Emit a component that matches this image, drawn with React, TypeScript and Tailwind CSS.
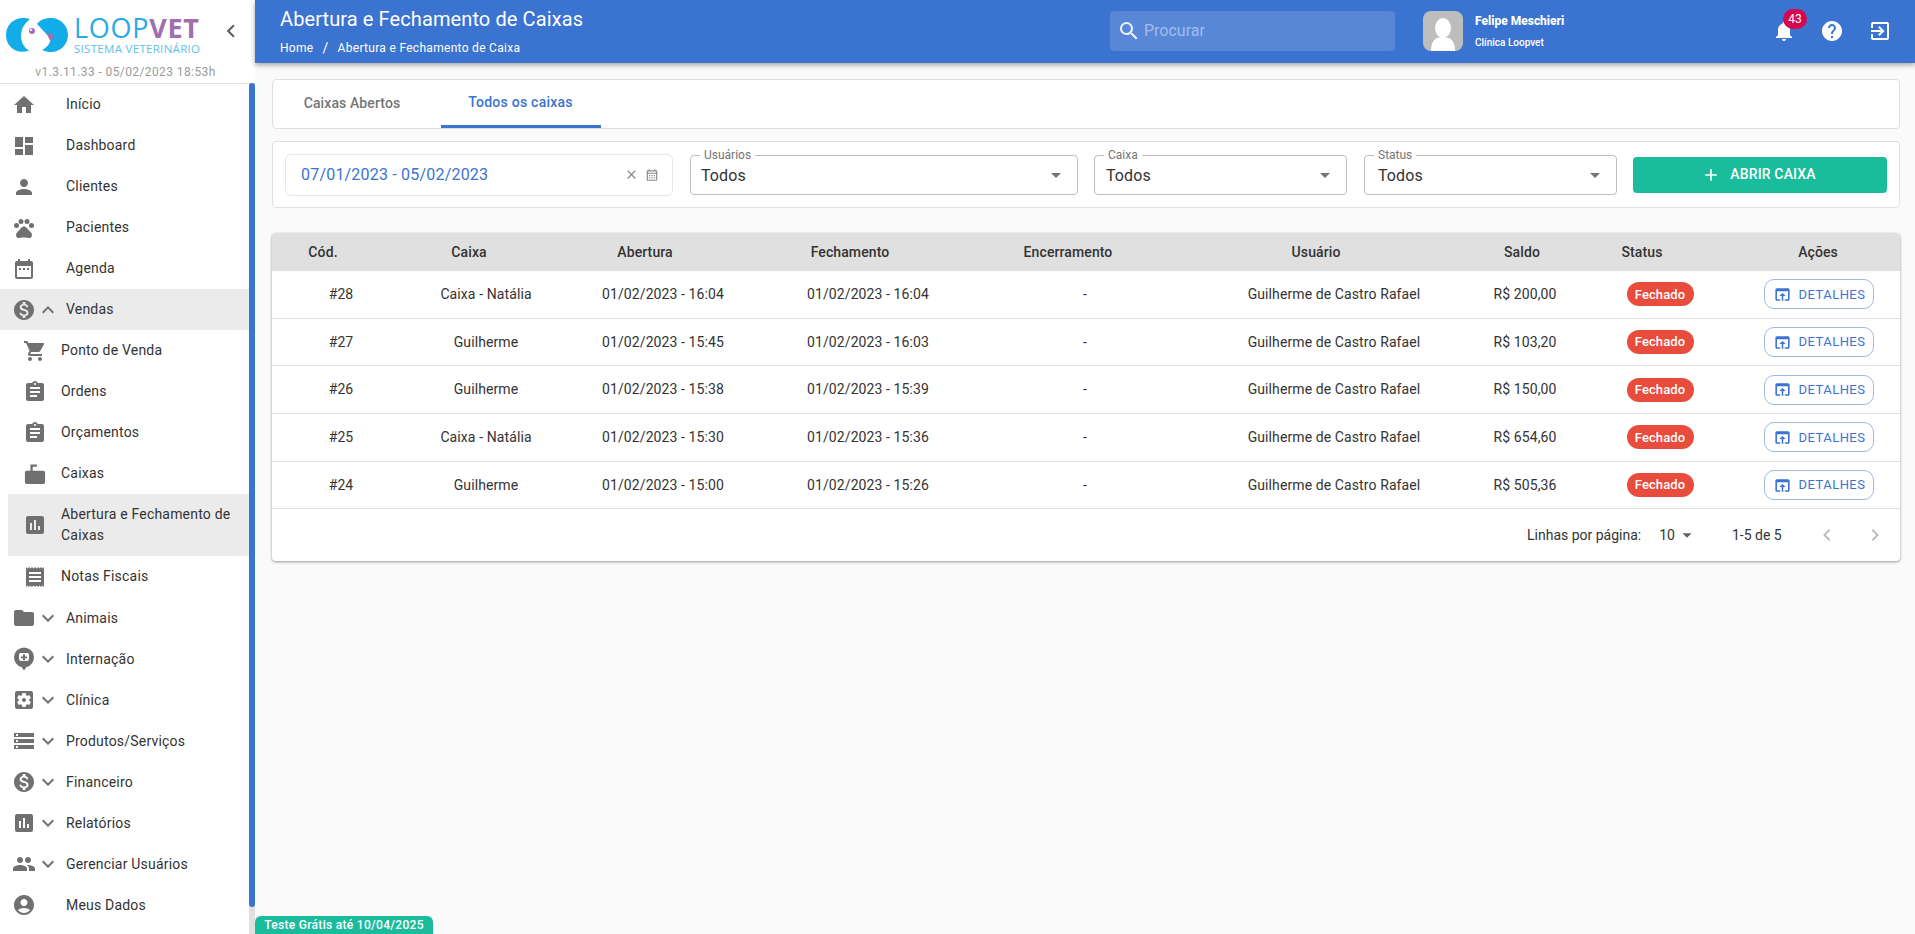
import React from "react";
import {
  MdHome, MdDashboard, MdPerson, MdPets, MdDateRange, MdMonetizationOn, MdExpandLess, MdExpandMore,
  MdShoppingCart, MdAssignment, MdAssessment, MdReceipt, MdFolder, MdSettingsApplications, MdStorage,
  MdPeople, MdAccountCircle, MdSearch, MdNotifications, MdHelp, MdExitToApp, MdOpenInBrowser, MdClose,
  MdOutlineCalendarMonth, MdArrowDropDown, MdChevronLeft, MdChevronRight, MdAdd,
} from "react-icons/md";

const HospitalPin = ({ size = 24 }: { size?: number }) => (
  <svg width={size} height={size} viewBox="0 0 24 24" fill="currentColor">
    <path fillRule="evenodd" d="M12 .5a10 10 0 0 1 2.200 19.750L12 23.500l-2.200-3.250A10 10 0 0 1 12 .5zM8.500 6A1.500 1.500 0 0 0 7 7.500v4A2.500 2.500 0 0 0 9.500 14h5a2.500 2.500 0 0 0 2.500-2.500v-4A1.500 1.500 0 0 0 15.500 6zM11 7.500h2v2h2v1.800h-2v2h-2v-2H9V9.500h2z" />
  </svg>
);

const CashBox = ({ size = 24 }: { size?: number }) => (
  <svg width={size} height={size} viewBox="0 0 24 24" fill="currentColor">
    <path d="M7 1.500h7V4H9.500v4.500H21a2 2 0 0 1 2 2V21a2 2 0 0 1-2 2H3a2 2 0 0 1-2-2V10.500a2 2 0 0 1 2-2h4z" />
  </svg>
);

const Logo = () => (
  <svg width="64" height="36" viewBox="6 17 64 36">
    <path fill="#12ace8" d="M30 19C17 15 6 23 6 35c0 12 11 20 23 15.500-5-3-8-8-8-14.500 0-7 3-12 9-17z" />
    <path fill="#12ace8" d="M37 24c3-4 8-6 14-6 10 0 17 8 17 17s-7 17-17 17c-3 0-6-.6-9-2 4-2 8-6 9-11z" />
    <path fill="#a76fb0" d="M46 33l8 2c-.5 3-2 5-4 6-1-3-2.500-6-4-8z" />
    <circle cx="32" cy="31" r="3" fill="#a76fb0" />
    <circle cx="31" cy="30" r="1" fill="#fff" />
  </svg>
);

type Item = { icon: React.ReactNode; label: React.ReactNode; arrow?: "up" | "down"; sub?: boolean; active?: boolean; tall?: boolean };

const items: Item[] = [
  { icon: <MdHome size={24} />, label: "Início" },
  { icon: <MdDashboard size={24} />, label: "Dashboard" },
  { icon: <MdPerson size={24} />, label: "Clientes" },
  { icon: <MdPets size={24} />, label: "Pacientes" },
  { icon: <MdDateRange size={24} />, label: "Agenda" },
  { icon: <MdMonetizationOn size={24} />, label: "Vendas", arrow: "up", active: true },
  { icon: <MdShoppingCart size={24} />, label: "Ponto de Venda", sub: true },
  { icon: <MdAssignment size={24} />, label: "Ordens", sub: true },
  { icon: <MdAssignment size={24} />, label: "Orçamentos", sub: true },
  { icon: <CashBox size={22} />, label: "Caixas", sub: true },
  { icon: <MdAssessment size={24} />, label: "Abertura e Fechamento de Caixas", sub: true, active: true, tall: true },
  { icon: <MdReceipt size={24} />, label: "Notas Fiscais", sub: true },
  { icon: <MdFolder size={24} />, label: "Animais", arrow: "down" },
  { icon: <HospitalPin size={26} />, label: "Internação", arrow: "down" },
  { icon: <MdSettingsApplications size={24} />, label: "Clínica", arrow: "down" },
  { icon: <MdStorage size={24} />, label: "Produtos/Serviços", arrow: "down" },
  { icon: <MdMonetizationOn size={24} />, label: "Financeiro", arrow: "down" },
  { icon: <MdAssessment size={24} />, label: "Relatórios", arrow: "down" },
  { icon: <MdPeople size={26} />, label: "Gerenciar Usuários", arrow: "down" },
  { icon: <MdAccountCircle size={24} />, label: "Meus Dados" },
];

const MenuRow = ({ item }: { item: Item }) => {
  if (item.sub) {
    return (
      <div className={`ml-2 flex items-center pl-[15px] pr-2 text-[#333] ${item.tall ? "h-[62px]" : "h-[41.050px]"} ${item.active ? "bg-[#ebebeb]" : ""}`}>
        <span className="flex w-[24px] shrink-0 justify-center text-[#707070]">{item.icon}</span>
        <span className="ml-[14px] text-[14px] leading-[21px] tracking-[0.2px]">{item.label}</span>
      </div>
    );
  }
  return (
    <div className={`flex h-[41.050px] items-center pl-[12px] text-[#333] ${item.active ? "bg-[#ebebeb]" : ""}`}>
      <span className="flex w-[24px] shrink-0 justify-center text-[#707070]">{item.icon}</span>
      <span className="flex w-[24px] shrink-0 justify-center text-[#707070]">
        {item.arrow === "up" && <MdExpandLess size={24} />}
        {item.arrow === "down" && <MdExpandMore size={24} />}
      </span>
      <span className="ml-[6px] text-[14px] tracking-[0.2px]">{item.label}</span>
    </div>
  );
};

const Select = ({ label, w, pl }: { label: string; w: string; pl: string }) => (
  <div className={`relative flex h-[40px] items-center justify-between rounded-[4px] border border-[#bdbdbd] pr-[9px] ${pl} ${w}`}>
    <span className="absolute left-[9px] top-[-7px] bg-white px-[4px] text-[12px] leading-[13px] text-[#757575]">{label}</span>
    <span className="pt-[2px] text-[16px] tracking-[0.1px] text-[#333]">Todos</span>
    <MdArrowDropDown size={24} className="text-[#757575]" />
  </div>
);

const rows = [
  ["#28", "Caixa - Natália", "01/02/2023 - 16:04", "01/02/2023 - 16:04", "R$ 200,00"],
  ["#27", "Guilherme", "01/02/2023 - 15:45", "01/02/2023 - 16:03", "R$ 103,20"],
  ["#26", "Guilherme", "01/02/2023 - 15:38", "01/02/2023 - 15:39", "R$ 150,00"],
  ["#25", "Caixa - Natália", "01/02/2023 - 15:30", "01/02/2023 - 15:36", "R$ 654,60"],
  ["#24", "Guilherme", "01/02/2023 - 15:00", "01/02/2023 - 15:26", "R$ 505,36"],
];

const headers = ["Cód.", "Caixa", "Abertura", "Fechamento", "Encerramento", "Usuário", "Saldo", "Status"];

export default function App() {
  return (
    <div className="flex h-screen w-full overflow-hidden bg-[#fafafa] font-['Roboto',sans-serif] text-[14px]">
      {/* Sidebar */}
      <aside className="flex h-full w-[255px] shrink-0 flex-col bg-white">
        <div className="flex h-[84px] shrink-0 flex-col border-b border-[#e0e0e0]">
          <div className="flex h-[63px] items-start pl-[6px] pt-[15px]">
            <div className="pt-[2px]"><Logo /></div>
            <div className="ml-[4px] flex w-[126px] flex-col">
              <div className="whitespace-nowrap font-['Open_Sans',sans-serif] text-[27px] leading-[26px] tracking-[0.7px] text-[#29abe2]">
                LOOP<span className="font-bold text-[#a06fae]">VET</span>
              </div>
              <div className="mt-[1px] whitespace-nowrap font-['Open_Sans',sans-serif] text-[11.500px] leading-[14px] tracking-[0.3px] text-[#5cc1ea]">SISTEMA VETERINÁRIO</div>
            </div>
            <MdChevronLeft size={26} className="ml-[18px] mt-[3px] text-[#616161]" />
          </div>
          <div className="pl-[2px] pr-[6px] text-center text-[12px] tracking-[0.4px] text-[#9a9a9a]">v1.3.11.33 - 05/02/2023 18:53h</div>
        </div>
        <div className="flex min-h-0 flex-1">
          <nav className="min-w-0 flex-1">
            {items.map((it, i) => <MenuRow key={i} item={it} />)}
          </nav>
          <div className="-mt-px w-[6px] shrink-0 bg-[#e0e0e0]">
            <div className="h-[824px] rounded-[3px] bg-[#3b73d1]" />
          </div>
        </div>
      </aside>

      {/* Main */}
      <main className="flex h-full min-w-0 flex-1 flex-col">
        <header className="z-10 flex h-[63px] shrink-0 items-start bg-[#3b73d1] pl-[25px] text-white shadow-[0_2px_5px_rgba(0,0,0,0.35)]">
          <div className="w-[830px] pt-[7px]">
            <div className="text-[20px] leading-[24px] tracking-[0.1px]">Abertura e Fechamento de Caixas</div>
            <div className="mt-[10px] flex items-center text-[12px] leading-[14px] tracking-[0.3px]">
              <span>Home</span>
              <span className="mx-[9px] text-[14px]">/</span>
              <span>Abertura e Fechamento de Caixa</span>
            </div>
          </div>
          <div className="mt-[11px] flex h-[40px] w-[285px] items-center rounded-[4px] bg-white/15 pl-[7px]">
            <MdSearch size={24} className="text-white/90" />
            <span className="ml-[3px] text-[16px] text-white/45">Procurar</span>
          </div>
          <div className="ml-[28px] mt-[11px] flex h-[40px] w-[40px] items-end justify-center overflow-hidden rounded-[8px] bg-[#bdbdbd]">
            <svg width="32" height="34" viewBox="0 0 32 34" fill="#fff">
              <ellipse cx="16" cy="11" rx="8" ry="10" />
              <path d="M4 34c0-10 4-14 12-14s12 4 12 14z" />
            </svg>
          </div>
          <div className="ml-[12px] pt-[11px]">
            <div className="text-[12px] font-extrabold leading-[20px]">Felipe Meschieri</div>
            <div className="mt-[3px] text-[10px] font-medium leading-[18px]">Clínica Loopvet</div>
          </div>
          <div className="ml-auto mr-[23px] mt-[19px] flex items-center gap-[24px]">
            <div className="relative">
              <MdNotifications size={24} />
              <span className="absolute left-[11px] top-[-10px] flex h-[20px] w-[24px] items-center justify-center rounded-full bg-[#d5054f] text-[12px]">43</span>
            </div>
            <MdHelp size={24} />
            <MdExitToApp size={24} />
          </div>
        </header>

        <div className="flex-1 pl-[17px] pr-[15px] pt-[16px]">
          {/* Tabs */}
          <div className="flex h-[50px] rounded-[4px] border border-[#e0e0e0] bg-white">
            <div className="flex h-full w-[168px] items-center justify-center pb-[2px] pr-[10px] text-[14px] font-medium tracking-[0.1px] text-[#757575]">Caixas Abertos</div>
            <div className="flex h-full w-[160px] items-center justify-center border-b-[3px] border-[#3b73d1] pr-[1px] text-[14px] font-medium tracking-[0.25px] text-[#3b73d1]">Todos os caixas</div>
          </div>

          {/* Filters */}
          <div className="mt-[12px] flex h-[67px] items-center rounded-[4px] border border-[#e0e0e0] bg-white pl-[12px]">
            <div className="flex h-[42px] w-[388px] items-center rounded-[6px] border border-[#e8e8e8] pl-[15px] pr-[13px]">
              <span className="text-[16px] tracking-[0.2px] text-[#3b73d1]">07/01/2023 - 05/02/2023</span>
              <MdClose size={15} className="ml-auto text-[#8a8a8a]" />
              <MdOutlineCalendarMonth size={14} className="ml-[6px] text-[#8a8a8a]" />
            </div>
            <div className="ml-[17px]"><Select label="Usuários" w="w-[388px]" pl="pl-[10px]" /></div>
            <div className="ml-[16px]"><Select label="Caixa" w="w-[253px]" pl="pl-[11px]" /></div>
            <div className="ml-[17px]"><Select label="Status" w="w-[253px]" pl="pl-[13px]" /></div>
            <div className="ml-[16px] flex h-[36px] w-[254px] items-center justify-center rounded-[4px] bg-[#1abc9c] pr-[3px] text-[14px] font-medium tracking-[0.15px] text-white">
              <MdAdd size={20} />
              <span className="ml-[9px]">ABRIR CAIXA</span>
            </div>
          </div>

          {/* Table */}
          <div className="mt-[25px] rounded-[4px] bg-white shadow-[0_1px_3px_rgba(0,0,0,0.4)]">
            <div className="grid h-[38px] grid-cols-[102px_190px_162px_248px_188px_308px_104px_136px_190px] items-center rounded-t-[4px] bg-[#e0e0e0] text-[14px] font-medium tracking-[0.1px] text-[#333]">
              {headers.map((h) => (
                <div key={h} className="flex justify-center whitespace-nowrap">{h}</div>
              ))}
              <div className="flex justify-center whitespace-nowrap pl-[26px]">Ações</div>
            </div>
            {rows.map((r) => (
              <div key={r[0]} className="grid h-[47.7px] grid-cols-[138px_152px_202px_208px_226px_272px_110px_160px_158px] items-center border-b border-[#e0e0e0] text-[14px] tracking-[0.1px] text-[#333]">
                <div className="text-center">{r[0]}</div>
                <div className="text-center">{r[1]}</div>
                <div className="text-center">{r[2]}</div>
                <div className="text-center">{r[3]}</div>
                <div className="text-center">-</div>
                <div className="text-center">Guilherme de Castro Rafael</div>
                <div className="text-center">{r[4]}</div>
                <div className="flex justify-center">
                  <span className="flex h-[24px] w-[67px] items-center justify-center rounded-full bg-[#e74c3c] text-[13px] font-medium text-white">Fechado</span>
                </div>
                <div className="flex justify-center">
                  <span className="flex h-[30px] w-[110px] items-center justify-center rounded-[10px] border border-[#9db9e4] text-[13px] font-normal tracking-[0.45px] text-[#3b73d1]">
                    <MdOpenInBrowser size={19} />
                    <span className="ml-[7px]">DETALHES</span>
                  </span>
                </div>
              </div>
            ))}
            <div className="flex h-[52px] items-center pl-[1255px] text-[14px] text-[#333]">
              <span className="whitespace-nowrap">Linhas por página:</span>
              <span className="ml-[18px]">10</span>
              <MdArrowDropDown size={22} className="ml-[1px] text-[#616161]" />
              <span className="ml-[34px] whitespace-nowrap">1-5 de 5</span>
              <MdChevronLeft size={24} className="ml-[33px] text-[#bdbdbd]" />
              <MdChevronRight size={24} className="ml-[24px] text-[#bdbdbd]" />
            </div>
          </div>
        </div>

        <div className="h-[18px] w-[178px] shrink-0 rounded-t-[6px] bg-[#1abc9c] text-center text-[12px] font-medium leading-[18px] tracking-[0.3px] text-white">
          Teste Grátis até 10/04/2025
        </div>
      </main>
    </div>
  );
}
